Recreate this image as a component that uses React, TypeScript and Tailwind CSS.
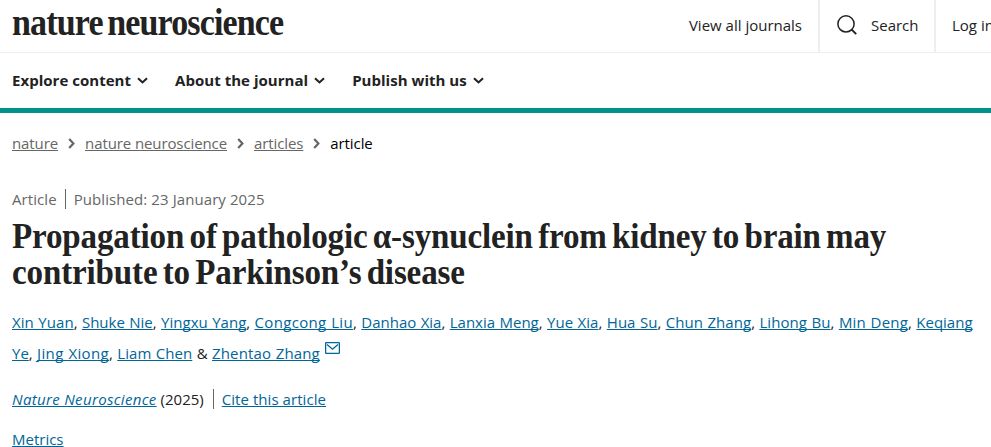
import { FC, Fragment } from 'react';

const authors = [
  { name: 'Xin Yuan', spacing: 'tracking-[0.06px]' },
  { name: 'Shuke Nie', spacing: 'tracking-[0px]' },
  { name: 'Yingxu Yang', spacing: 'tracking-[0.02px]' },
  { name: 'Congcong Liu', spacing: 'tracking-[0.32px]' },
  { name: 'Danhao Xia', spacing: 'tracking-[0px]' },
  { name: 'Lanxia Meng', spacing: 'tracking-[0px]' },
  { name: 'Yue Xia', spacing: 'tracking-[0.04px]' },
  { name: 'Hua Su', spacing: 'tracking-[0.04px]' },
  { name: 'Chun Zhang', spacing: 'tracking-[0.05px]' },
  { name: 'Lihong Bu', spacing: 'tracking-[0.08px]' },
  { name: 'Min Deng', spacing: 'tracking-[0.2px]' },
  { name: 'Keqiang Ye', spacing: 'tracking-[0px]' },
  { name: 'Jing Xiong', spacing: 'tracking-[0.35px]' },
  { name: 'Liam Chen', spacing: 'tracking-[0.06px]' },
  { name: 'Zhentao Zhang', spacing: 'tracking-[0.14px]' },
];

const linkClass = 'text-[#006699] underline decoration-1 underline-offset-1 [text-decoration-skip-ink:none]';
const crumbClass = 'text-[#666] underline decoration-1 underline-offset-1 [text-decoration-skip-ink:none]';

const ChevronDown = () => (
  <svg className="mt-px h-[7px] w-[11px]" viewBox="0 0 11 7" fill="none" stroke="#222" strokeWidth="2.1">
    <path d="M1 1.2 5.5 5.4 10 1.2" />
  </svg>
);

const ChevronRight = () => (
  <svg className="mx-[10px] h-[11px] w-[7px]" viewBox="0 0 7 11" fill="none" stroke="#666" strokeWidth="2.2">
    <path d="M1.2 1 5.4 5.5 1.2 10" />
  </svg>
);

const SearchIcon = () => (
  <svg className="h-5 w-5" viewBox="0 0 20 20" fill="none" stroke="#222">
    <circle cx="9" cy="8.9" r="8.1" strokeWidth="1.5" />
    <path d="m14.5 14.4 4.7 4.7" strokeWidth="2" />
  </svg>
);

const MailIcon = () => (
  <svg className="ml-[5px] inline-block h-3 w-[15px] align-[5px]" viewBox="0 0 15 12" fill="none" stroke="#006699" strokeWidth="1.3">
    <rect x=".6" y=".6" width="13.8" height="10.8" rx="1" />
    <path d="m2 2.5 5.5 4.7L13 2.5" />
  </svg>
);

type NavItemProps = { label: string };
const NavItem: FC<NavItemProps> = ({ label }) => (
  <a className="flex items-center gap-[6px] font-bold tracking-[0.03px]">
    {label}
    <ChevronDown />
  </a>
);

export default function App() {
  return (
    <div className="h-[447px] w-[991px] overflow-hidden bg-white font-['Open_Sans',sans-serif] text-[15px] leading-5 text-[#222]">
      <header className="flex h-[53px] border-b border-[#eee] pl-3">
        <div className="flex-1 origin-left scale-x-[0.895] font-['Liberation_Serif',serif] text-[38px] leading-[44px] font-bold tracking-[-0.95px] [word-spacing:-3.5px] whitespace-nowrap">
          nature neuroscience
        </div>
        <a className="flex items-center pr-4 pb-[2px]">View all journals</a>
        <a className="flex w-[116px] items-center gap-[14px] border-l-2 border-[#eee] pb-[2px] pl-[17px]">
          <SearchIcon />
          Search
        </a>
        <a className="flex w-[57px] items-center border-l-2 border-[#eee] pb-[2px] pl-4 whitespace-nowrap">Log in</a>
      </header>

      <nav className="flex h-[60px] items-center gap-[27px] border-b-[5px] border-[#00928b] pb-[2px] pl-3">
        <NavItem label="Explore content" />
        <NavItem label="About the journal" />
        <NavItem label="Publish with us" />
      </nav>

      <main className="px-3">
        <div className="mt-5 flex items-center tracking-[-0.1px]">
          <a className={crumbClass}>nature</a>
          <ChevronRight />
          <a className={crumbClass}>nature neuroscience</a>
          <ChevronRight />
          <a className={crumbClass}>articles</a>
          <ChevronRight />
          <span className="text-black">article</span>
        </div>

        <div className="mt-9 flex items-center tracking-[0.08px] text-[#666]">
          <span className="mr-2 border-r border-[#666] pr-2">Article</span>
          <span>Published: 23 January 2025</span>
        </div>

        <h1 className="mt-[10px] origin-left scale-x-[0.944] font-['Liberation_Serif',serif] text-[35px] leading-9 font-bold tracking-[-0.15px] [word-spacing:-3px] whitespace-nowrap">
          Propagation of pathologic α-synuclein from kidney to brain may
          <br />
          contribute to Parkinson’s disease
        </h1>

        <p className="mt-4 leading-[31px] [word-spacing:0.5px]">
          {authors.map((author, i) => (
            <Fragment key={author.name}>
              {i > 0 && (i === authors.length - 1 ? ' & ' : ', ')}
              <a className={`${linkClass} ${author.spacing}`}>{author.name}</a>
            </Fragment>
          ))}
          <MailIcon />
        </p>

        <div className="mt-5 flex items-center">
          <span className="mr-2 border-r border-[#666] pr-[9px]">
            <a className={`${linkClass} italic tracking-[0.33px]`}>Nature Neuroscience</a> (2025)
          </span>
          <a className={`${linkClass} tracking-[0.06px]`}>Cite this article</a>
        </div>

        <div className="mt-5">
          <a className={linkClass}>Metrics</a>
        </div>
      </main>
    </div>
  );
}
